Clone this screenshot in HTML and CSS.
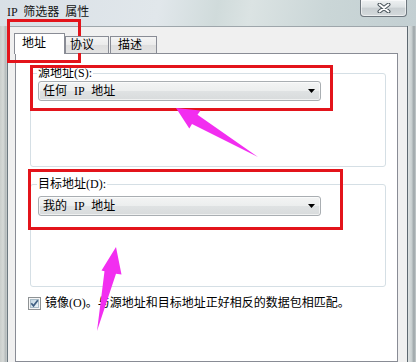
FILE: index.html
```html
<!DOCTYPE html>
<html lang="zh-CN">
<head>
<meta charset="utf-8">
<title>IP 筛选器 属性</title>
<link rel="stylesheet" href="styles.css">
</head>
<body>
<div class="window">
  <div class="titlebar">
    <span class="title">IP 筛选器 属性</span>
    <button class="close" aria-label="关闭">
      <svg width="14" height="10" viewBox="0 0 14 10"><path d="M2.5 1.5 L11.5 8.5 M11.5 1.5 L2.5 8.5" stroke="#4a555c" stroke-width="4" stroke-linecap="round"/><path d="M2.5 1.5 L11.5 8.5 M11.5 1.5 L2.5 8.5" stroke="#ffffff" stroke-width="2" stroke-linecap="round"/></svg>
    </button>
  </div>
  <div class="frame">
    <div class="side side-left"></div>
    <div class="content">
      <div class="tabs">
        <div class="tab tab-active">地址</div>
        <div class="tab tab-2">协议</div>
        <div class="tab tab-3">描述</div>
      </div>
      <div class="panel">
        <fieldset class="group group-src">
          <legend>源地址(S):</legend>
          <div class="combo">
            <span class="combo-text">任何 IP 地址</span>
            <svg class="combo-arrow" width="7" height="4" viewBox="0 0 7 4"><polygon points="0,0 7,0 3.5,4" fill="#000"/></svg>
          </div>
        </fieldset>
        <fieldset class="group group-dst">
          <legend>目标地址(D):</legend>
          <div class="combo">
            <span class="combo-text">我的 IP 地址</span>
            <svg class="combo-arrow" width="7" height="4" viewBox="0 0 7 4"><polygon points="0,0 7,0 3.5,4" fill="#000"/></svg>
          </div>
        </fieldset>
        <div class="check">
          <svg class="checkbox" width="13" height="13" viewBox="0 0 13 13">
            <defs><linearGradient id="cbg" x1="0" y1="0" x2="1" y2="1"><stop offset="0" stop-color="#c2d6e2"/><stop offset="1" stop-color="#eef5f8"/></linearGradient></defs>
            <rect x="0.5" y="0.5" width="12" height="12" fill="#f6f6f6" stroke="#8e9294"/>
            <rect x="2.5" y="2.5" width="8" height="8" fill="url(#cbg)" stroke="#a9bcc8"/>
            <path d="M3.3 6.3 L5.5 8.8 L9.8 3.3" fill="none" stroke="#3f5f82" stroke-width="1.7"/>
          </svg>
          <span class="check-text">镜像(O)。与源地址和目标地址正好相反的数据包相匹配。</span>
        </div>
      </div>
    </div>
    <div class="side side-right"></div>
  </div>
  <div class="mark mark-tab"></div>
  <div class="mark mark-src"></div>
  <div class="mark mark-dst"></div>
  <svg class="arrows" width="416" height="362" viewBox="0 0 416 362">
    <polygon points="176,108 200.5,110.5 197.5,114.8 258,157 192,124 189.3,128.5" fill="#f22ef0"/>
    <polygon points="116,247 121.5,274.5 116,273.8 97,331 104.5,271.2 101.5,270.5" fill="#f22ef0"/>
  </svg>
</div>
</body>
</html>
```

FILE: styles.css
```css
* { box-sizing: border-box; }
html, body { margin: 0; padding: 0; }
body {
  width: 416px;
  height: 362px;
  overflow: hidden;
  background: #cdd5d8;
  font-family: "Liberation Serif", "Noto Sans CJK SC", serif;
  font-size: 12px;
  color: #000;
}
.window {
  position: relative;
  width: 416px;
  height: 362px;
  overflow: hidden;
  display: flex;
  flex-direction: column;
}
.titlebar {
  height: 26px;
  flex: none;
  display: flex;
  justify-content: space-between;
  align-items: flex-start;
  background: linear-gradient(100deg, #d9e0e6 0%, #e1e7eb 38%, #d0dbdb 52%, #dbe3e3 60%, #cad6d7 78%, #c3cfd2 100%);
}
.title {
  padding: 5px 0 0 7px;
  line-height: 14px;
  word-spacing: 3px;
  color: #141414;
}
.close {
  width: 47px;
  height: 17px;
  margin-right: 9px;
  padding: 0;
  border: 1px solid #6e777e;
  border-top: 0;
  border-radius: 0 0 4px 4px;
  background: linear-gradient(#eef1f2, #dde2e4 45%, #c9cfd2 50%, #d5dadc);
  box-shadow: inset 0 0 0 1px rgba(255, 255, 255, 0.55);
  display: flex;
  align-items: center;
  justify-content: center;
}
.frame {
  flex: 1;
  display: flex;
  min-height: 0;
}
.side-left {
  width: 8px;
  border-right: 1px solid #6c7880;
  background: linear-gradient(90deg, #c9cdcb, #d6d9d7 45%, #b6bcbd 80%, #c7cccc);
}
.side-right {
  width: 9px;
  border-left: 1px solid #5d6870;
  background: linear-gradient(90deg, #dfe3e3, #c8cfd0 45%, #9ba3a6 75%, #c6cdce);
}
.content {
  flex: 1;
  background: #f0f0f0;
  border-top: 1px solid #9ea6ab;
  padding-top: 6px;
  display: flex;
  flex-direction: column;
}
.tabs {
  position: relative;
  z-index: 1;
  display: flex;
  align-items: flex-end;
  height: 20px;
  padding-left: 6px;
  flex: none;
}
.tab {
  border: 1px solid #898c95;
  border-bottom: 0;
  line-height: 14px;
  white-space: nowrap;
}
.tab-active {
  width: 51px;
  height: 21px;
  margin-bottom: -1px;
  padding: 2px 0 0 7px;
  background: #fff;
}
.tab-2,
.tab-3 {
  height: 17px;
  padding-top: 1px;
  background: linear-gradient(#f4f4f4, #ebebeb 50%, #dedede 51%, #e3e3e3);
}
.tab-2 {
  width: 44px;
  padding-left: 4px;
}
.tab-3 {
  width: 47px;
  margin-left: 1px;
  padding-left: 7px;
}
.panel {
  flex: 1;
  margin-left: 7px;
  width: 383px;
  border: 1px solid #898c95;
  background: #fff;
  padding: 12px 11px 0 14px;
}
.group {
  margin: 0 0 10px;
  border: 1px solid #d5dfe5;
  border-radius: 3px;
  min-width: 0;
}
.group legend {
  padding: 0 1px;
  margin-left: -1px;
  line-height: 14px;
  font-size: 12px;
}
.group-src { padding: 1px 7px 65px; }
.group-dst { padding: 5px 7px 70px; }
.combo {
  width: 283px;
  height: 20px;
  border: 1px solid #a9aeb2;
  border-radius: 3px;
  background: linear-gradient(#f3f4f4, #eceeee 48%, #dfe2e3 52%, #d8dbdc);
  box-shadow: inset 0 0 0 1px rgba(255, 255, 255, 0.6);
  display: flex;
  align-items: center;
  justify-content: space-between;
  padding: 0 5px 0 4px;
}
.combo-text {
  line-height: 14px;
  word-spacing: 4px;
  white-space: nowrap;
}
.check {
  display: flex;
  align-items: center;
  gap: 4px;
  margin-left: -2px;
  line-height: 13px;
}
.checkbox { flex: none; }
.check-text { white-space: nowrap; }
.mark {
  position: absolute;
  border: 3px solid #e3141b;
  pointer-events: none;
}
.mark-tab { left: 7px; top: 19px; width: 74px; height: 44px; }
.mark-src { left: 30px; top: 65px; width: 303px; height: 46px; }
.mark-dst { left: 28px; top: 169px; width: 315px; height: 61px; }
.arrows {
  position: absolute;
  left: 0;
  top: 0;
  pointer-events: none;
}
```
